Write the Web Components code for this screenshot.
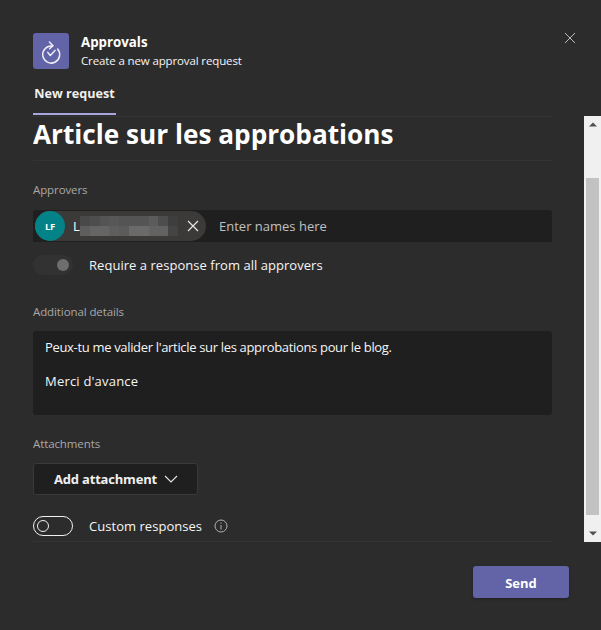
<!DOCTYPE html>
<html><head><meta charset="utf-8">
<style>
html,body{margin:0;padding:0;background:#2d2c2c;}
body{width:601px;height:630px;overflow:hidden;font-family:"Open Sans","Noto Sans",sans-serif;color:#fff;}
</style></head><body>
<approval-dialog></approval-dialog>
<script>
function def(name, html){
  customElements.define(name, class extends HTMLElement{
    constructor(){super();this.attachShadow({mode:'open'}).innerHTML=html;}
  });
}
def('app-header',`<style>
:host{display:flex;align-items:center;gap:12px;padding:33px 0 0 33px;position:relative;height:36px}
.logo{width:36px;height:36px;border-radius:3px;background:#6264a7;display:block;flex:none}
.t{font-size:13.3px;line-height:17px;font-weight:700;color:#fff;margin-top:1px}
.s{font-size:11.5px;line-height:17px;color:#f5f5f5;margin-top:1px;letter-spacing:-.13px}
.x{position:absolute;right:25px;top:32px;width:12px;height:12px}
</style>
<svg class="logo" viewBox="0 0 36 36" fill="none" stroke="#eeeef8" stroke-width="1.5" stroke-linecap="round" stroke-linejoin="round">
<path d="M18.8 13.1A8.5 8.5 0 1 0 24.6 16"/><path d="M16.4 9 20 12.7 16.6 15.8"/><path d="M14.8 19.4 17.3 22.4 22 17.4"/></svg>
<div><div class="t">Approvals</div><div class="s">Create a new approval request</div></div>
<svg class="x" viewBox="0 0 12 12" stroke="#bdbdbd" stroke-width="1"><path d="M1 1 11 11M11 1 1 11"/></svg>`);

def('tab-bar',`<style>
:host{display:block;margin:12px 49px 0 33px;height:35px;border-bottom:1px solid #353434}
.tab{width:83px;height:29px;padding-top:3px;border-bottom:2px solid #a6a7dc;font-size:12.6px;font-weight:700;line-height:20px;text-align:center;color:#f0f0f0}
</style><div class="tab">New request</div>`);

def('field-label',`<style>:host{display:block;font-size:11.5px;line-height:16px;color:#a8a8a8;letter-spacing:-.1px}</style><slot></slot>`);

def('person-pill',`<style>
:host{display:flex;align-items:center;height:30px;width:171px;border-radius:15px;background:#3b3a39;margin:0 0 0 2px;position:relative;flex:none}
.av{width:30px;height:30px;border-radius:50%;background:#038387;font-size:9.5px;font-weight:700;color:#fff;display:flex;align-items:center;justify-content:center;letter-spacing:-.2px}
.n{font-size:13px;margin-left:8px;color:#fff}
.b{position:absolute;left:45px;top:5px;width:98px;height:20px;display:grid;grid-template-columns:repeat(10,1fr);grid-template-rows:1fr 1fr}
.b i{display:block}
.x{position:absolute;right:7px;top:9px;width:12px;height:12px}
</style><div class="av">LF</div><div class="n">L</div>
<div class="b" id="b"></div>
<svg class="x" viewBox="0 0 12 12" stroke="#e6e6e6" stroke-width="1.2"><path d="M1 1 11 11M11 1 1 11"/></svg>`);

def('people-picker',`<style>
:host{display:flex;align-items:center;height:32px;background:#1f1f1f;border-radius:3px 3px 0 0}
.p{font-size:13px;color:#c0c0c0;margin-left:13px}
</style><person-pill></person-pill><span class="p">Enter names here</span>`);

def('toggle-row',`<style>
:host{display:flex;align-items:center;height:20px;font-size:13px;color:#f5f5f5;letter-spacing:.04px}
.tg{width:40px;height:20px;border-radius:10px;box-sizing:border-box;position:relative;flex:none;margin-right:16px}
.tg i{position:absolute;border-radius:50%;display:block}
:host([mode=dim]) .tg{background:#333232}
:host([mode=dim]) .tg i{width:12px;height:12px;right:4px;top:4px;background:#6e6e6e}
:host([mode=off]) .tg{border:1px solid #f0f0f0}
:host([mode=off]) .tg i{width:12px;height:12px;left:3px;top:3px;border:1px solid #f0f0f0;box-sizing:border-box}
</style><div class="tg"><i></i></div><slot></slot><slot name="after"></slot>`);

def('text-line',`<style>:host{display:block;line-height:17.5px}</style><slot></slot>`);
def('text-box',`<style>
:host{display:block;height:84px;background:#1f1f1f;border-radius:3px;box-sizing:border-box;padding:8px 12px;font-size:13px;color:#f5f5f5}
</style><slot></slot>`);

def('attach-button',`<style>
:host{display:flex;align-items:center;justify-content:center;gap:7px;width:165px;height:32px;box-sizing:border-box;background:#201f1f;border:1px solid #3a3939;border-radius:3px;font-size:13px;font-weight:700;color:#f0f0f0;letter-spacing:-.2px;padding-left:1px}
</style><slot></slot><svg width="14" height="8" viewBox="0 0 14 8" fill="none" stroke="#e6e6e6" stroke-width="1.1"><path d="M1 1 7 7 13 1"/></svg>`);

def('fake-scrollbar',`<style>
:host{display:flex;flex-direction:column;width:17px;background:#f0f0f0;align-items:center;justify-content:space-between;position:relative}
.thumb{position:absolute;left:2px;width:13px;top:62px;height:337px;background:#c2c2c2}
svg{display:block;margin:6px 0}
</style><svg width="8" height="5" viewBox="0 0 8 5"><path d="M4 .5 8 4.5H0Z" fill="#505050"/></svg><div class="thumb"></div><svg width="8" height="5" viewBox="0 0 8 5"><path d="M4 4.5 8 .5H0Z" fill="#505050"/></svg>`);

def('approval-form',`<style>
:host{display:block;width:519px}
h1{margin:0;font-size:26.2px;line-height:36px;font-weight:700;color:#fff;border-bottom:1px solid #353434;height:45px;box-sizing:border-box}
.a{margin-top:21px}.pk{margin-top:12px}
toggle-row{margin-top:13px}
.d{margin-top:29px}text-box{margin-top:11px}
.at{margin-top:21px}attach-button{margin-top:11px}
.c{margin-top:21px;padding-bottom:5px;border-bottom:1px solid #353434}
.l1{letter-spacing:-.33px}.l2{margin-top:16.5px;letter-spacing:.2px}
svg{margin-left:12px;display:block}
</style>
<h1>Article sur les approbations</h1>
<field-label class="a">Approvers</field-label>
<people-picker class="pk"></people-picker>
<toggle-row mode="dim">Require a response from all approvers</toggle-row>
<field-label class="d">Additional details</field-label>
<text-box><text-line class="l1">Peux-tu me valider l'article sur les approbations pour le blog.</text-line><text-line class="l2">Merci d'avance</text-line></text-box>
<field-label class="at">Attachments</field-label>
<attach-button>Add attachment</attach-button>
<toggle-row class="c" mode="off">Custom responses<svg slot="after" width="14" height="14" viewBox="0 0 14 14" fill="none" stroke="#b0b0b0"><circle cx="7" cy="7" r="6"/><path d="M7 6v4.5M7 3.5v1.2"/></svg></toggle-row>`);

def('approval-dialog',`<style>
:host{display:block;width:601px;height:630px}
.body{display:flex;height:426px;padding-left:33px;margin-top:-1px}
.scroll{width:519px;overflow:hidden}
.gap{flex:1}
.foot{display:flex;justify-content:flex-end;padding:24px 32px 0 0}
.send{width:96px;height:32px;padding-top:1px;box-sizing:border-box;border-radius:3px;background:#6264a7;font-size:13px;font-weight:700;color:#fff;display:flex;align-items:center;justify-content:center;box-shadow:0 1px 3px rgba(0,0,0,.3)}
</style>
<app-header></app-header>
<tab-bar></tab-bar>
<div class="body"><div class="scroll"><approval-form></approval-form></div><div class="gap"></div><fake-scrollbar></fake-scrollbar></div>
<div class="foot"><div class="send">Send</div></div>`);
const pill=document.querySelector('approval-dialog').shadowRoot.querySelector('approval-form').shadowRoot.querySelector('people-picker').shadowRoot.querySelector('person-pill');
const b=pill.shadowRoot.getElementById('b');
['#4a4949','#4e4d4d','#555454','#585757','#555454','#555454','#555454','#5c5b5b','#4e4d4d','#3f3e3e','#5f5e5e','#666565','#666565','#5f5e5e','#5c5b5b','#6b6a6a','#6b6a6a','#636262','#636262','#454444'].forEach(c=>{const i=document.createElement('i');i.style.background=c;b.appendChild(i);});
</script></body></html>
